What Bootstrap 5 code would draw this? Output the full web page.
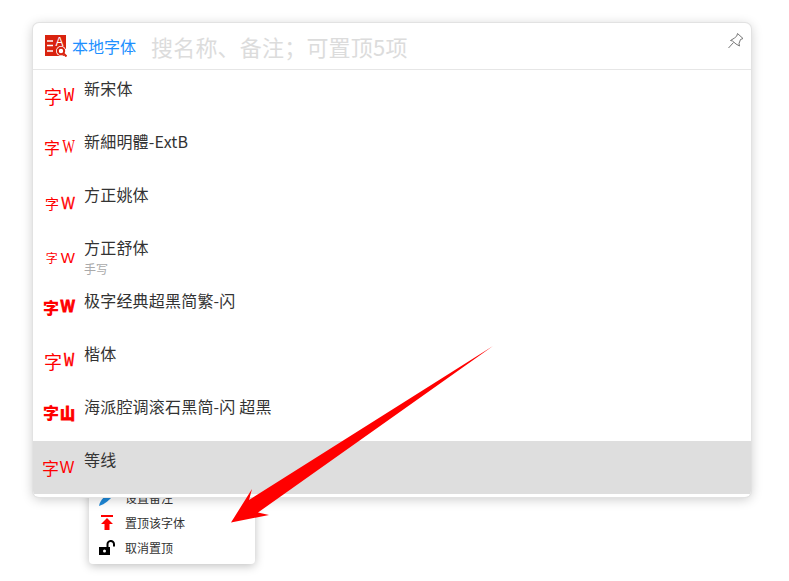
<!DOCTYPE html>
<html lang="zh-CN">
<head>
<meta charset="utf-8">
<title>本地字体</title>
<link href="https://cdn.jsdelivr.net/npm/bootstrap@5.3.0/dist/css/bootstrap.min.css" rel="stylesheet">
<style>
html,body{height:581px;overflow:hidden;background:#fff}
body{font-family:"Noto Sans CJK SC","Liberation Sans",sans-serif;color:#333;position:relative}
.stage{padding:23px 38px 0 33px}
.panel-box{position:relative;z-index:2;height:474px;background:#fff;border-radius:6px;box-shadow:0 0 0 1px #e2e2e2,0 2px 12px rgba(0,0,0,.22);overflow:hidden}
.panel-head{height:47px;padding:0 0 0 12px;border-bottom:1px solid #e6e6e6}
.panel-logo{width:22px;height:22px;flex:none}
.panel-title{font-size:16px;color:#1e90ff;margin-left:5px;line-height:22px;white-space:nowrap}
.panel-search{font-size:22px;color:#dcdcdc;margin-left:15px;line-height:30px;letter-spacing:.2px;white-space:nowrap}
.panel-pin{position:absolute;right:6px;top:9px;width:18px;height:18px}
.font-list{border-radius:0}
.font-row{height:53px;padding:8px 0 0 9px;border:0;display:flex;color:#333;background:transparent}
.font-row.is-current{background:#dedede}
.font-demo{width:33px;margin-right:9px;height:36px;color:#f00;display:flex;align-items:center;justify-content:flex-end;line-height:1;flex:none}
.font-demo i{font-style:normal;display:block}
.font-name{font-size:16px;line-height:20px;letter-spacing:.2px;white-space:nowrap}
.font-note{font-size:12px;line-height:14px;color:#aaa;margin-top:5px}
.d1 b{font:400 18px "Noto Sans CJK SC",serif;margin-right:1px}.d1 i{font:400 20px/1 "Liberation Mono",monospace;transform:scaleX(.85)}
.d2{margin-top:-2px}.d2 b{font:400 16px "Noto Sans CJK SC",serif;margin-right:2px}.d2 i{font:400 18px/1 "Liberation Serif",serif;transform:scaleX(.75);margin:0 -2px}
.d3{margin-top:1px}.d3 b{font:400 14px "Noto Sans CJK SC",serif;margin-right:2px}.d3 i{font:400 17px/1 "Liberation Sans",sans-serif;transform:scaleX(.85);-webkit-text-stroke:.3px #f00;margin:0 -1px}
.d4{margin-top:2px}.d4 b{font:400 12px "Noto Sans CJK SC",serif;margin-right:3px}.d4 i{font:400 15px/1 "Liberation Sans",sans-serif}
.d5{margin-top:-1px}.d5 b{font:900 16px "Noto Sans CJK SC",sans-serif;margin-right:1px}.d5 i{font:700 16px/1 "Liberation Sans",sans-serif;-webkit-text-stroke:.8px #f00;transform:scaleX(.95)}
.d6 b{font:400 18px "Noto Sans CJK SC",serif;margin-right:1px}.d6 i{font:400 20px/1 "Liberation Mono",monospace;transform:scaleX(.85);-webkit-text-stroke:.3px #f00}
.d7{margin-top:-2px}.d7 b{font:900 16px "Noto Sans CJK SC",sans-serif;margin-right:1px}.d7 i{font:900 15px/1 "Noto Sans CJK SC",sans-serif;-webkit-text-stroke:.8px #f00}
.d8 b{font:400 17px "Noto Sans CJK SC",sans-serif;margin-right:0}.d8 i{font:400 17px/1 "Liberation Sans",sans-serif;transform:scaleX(.9)}
.ctx-menu{position:relative;z-index:1;width:166px;margin:-14px 0 0 56px;padding:2px 0 4px;background:#fff;border-radius:4px;box-shadow:0 2px 10px rgba(0,0,0,.25)}
.ctx-row{height:25px;padding-left:10px;font-size:12px;color:#333;line-height:25px;display:flex;align-items:center}
.ctx-ico{width:16px;height:16px;margin-right:10px;flex:none}
.arrow-mark{position:absolute;left:0;top:0;width:789px;height:581px;z-index:3;pointer-events:none}
</style>
</head>
<body>
<div class="stage">
  <div class="panel-box">
    <div class="panel-head d-flex align-items-center">
      <svg class="panel-logo" viewBox="0 0 22 22">
        <path d="M0 0H21V14H19V21H0Z" fill="#d9230f"/>
        <path d="M2 6H8M2 10.5H8M2 16H8" stroke="#fff" stroke-width="1.6"/>
        <text x="10.5" y="10.5" font-family="Liberation Sans" font-size="12" fill="#fff">A</text>
        <circle cx="16" cy="16" r="5" fill="#fff"/>
        <circle cx="16" cy="16" r="3.2" fill="none" stroke="#d9230f" stroke-width="2"/>
        <path d="M18.5 18.5L21.5 21.5" stroke="#d9230f" stroke-width="2"/>
      </svg>
      <span class="panel-title">本地字体</span>
      <span class="panel-search">搜名称、备注；可置顶5项</span>
      <svg class="panel-pin" viewBox="0 0 18 18" fill="none" stroke="#777" stroke-width="1">
        <path d="M10.5 1.5L16 6.5L13.5 7.5L12 11.5L12.5 14L9 12L5.5 9L3.5 8.5L7.5 6L9.8 4Z" stroke-linejoin="round"/>
        <path d="M6.5 10.5L1.5 16"/>
      </svg>
    </div>
    <div class="list-group list-group-flush font-list">
      <div class="list-group-item font-row"><div class="font-demo d1"><b>字</b><i>W</i></div><div class="font-name">新宋体</div></div>
      <div class="list-group-item font-row"><div class="font-demo d2"><b>字</b><i>W</i></div><div class="font-name">新細明體-ExtB</div></div>
      <div class="list-group-item font-row"><div class="font-demo d3"><b>字</b><i>W</i></div><div class="font-name">方正姚体</div></div>
      <div class="list-group-item font-row"><div class="font-demo d4"><b>字</b><i>W</i></div><div><div class="font-name">方正舒体</div><div class="font-note">手写</div></div></div>
      <div class="list-group-item font-row"><div class="font-demo d5"><b>字</b><i>W</i></div><div class="font-name">极字经典超黑简繁-闪</div></div>
      <div class="list-group-item font-row"><div class="font-demo d6"><b>字</b><i>W</i></div><div class="font-name">楷体</div></div>
      <div class="list-group-item font-row"><div class="font-demo d7"><b>字</b><i>山</i></div><div class="font-name">海派腔调滚石黑简-闪 超黑</div></div>
      <div class="list-group-item font-row is-current"><div class="font-demo d8"><b>字</b><i>W</i></div><div class="font-name">等线</div></div>
    </div>
  </div>
  <div class="ctx-menu">
    <div class="ctx-row">
      <svg class="ctx-ico" viewBox="0 0 16 16"><path d="M0 16C1 10 6 5 13 2L15 4C11 10 6 14 0 16Z" fill="#1e88d8"/></svg>
      <span>设置备注</span>
    </div>
    <div class="ctx-row">
      <svg class="ctx-ico" viewBox="0 0 16 16"><path d="M2 0H14V2H2ZM8 3L14 9H10.5V15H5.5V9H2Z" fill="#f00"/></svg>
      <span>置顶该字体</span>
    </div>
    <div class="ctx-row">
      <svg class="ctx-ico" viewBox="0 0 16 16"><path d="M0 7H11V15H0Z" fill="#000"/><circle cx="5.5" cy="11" r="1.5" fill="#fff"/><path d="M8.5 7V4.5A3.2 3.2 0 0 1 15 4V6.5" fill="none" stroke="#000" stroke-width="2"/></svg>
      <span>取消置顶</span>
    </div>
  </div>
</div>
<svg class="arrow-mark" viewBox="0 0 789 581"><path d="M493 346L249 500L252 489L231 522.5L269 515L258 512.5Z" fill="#f00"/></svg>
<script src="https://cdn.jsdelivr.net/npm/bootstrap@5.3.0/dist/js/bootstrap.bundle.min.js"></script>
</body>
</html>
